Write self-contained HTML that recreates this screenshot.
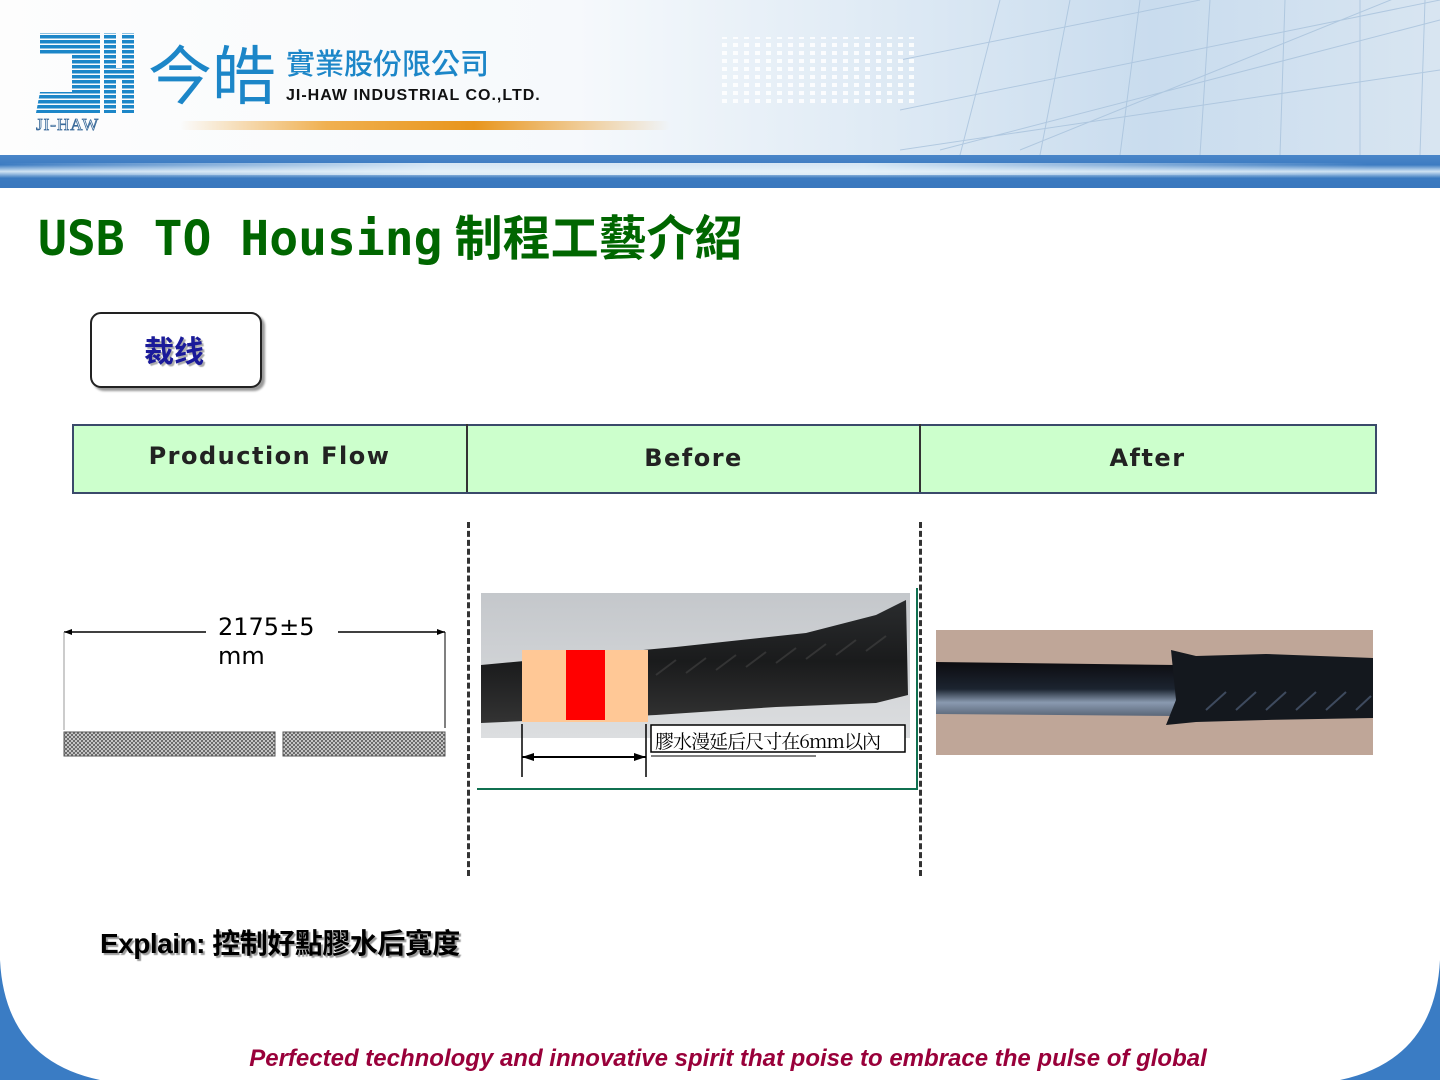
<!DOCTYPE html>
<html><head><meta charset="utf-8">
<style>
body{margin:0;width:1440px;height:1080px;position:relative;overflow:hidden;background:#fff;font-family:"Liberation Sans","Noto Sans CJK TC",sans-serif}
.a{position:absolute}
</style></head><body>
<!-- header -->
<div class="a" style="left:0;top:0;width:1440px;height:155px;background:linear-gradient(90deg,#fdfdfd 0%,#f6f9fc 40%,#e0ebf5 60%,#c9dcee 80%,#d8e5f1 100%)"></div>
<svg class="a" style="left:900px;top:0" width="540" height="155">
<g stroke="#a8c2dc" stroke-width="1" fill="none" opacity=".8">
<path d="M0 150 L540 70 M40 150 L540 20 M120 150 L540 -20 M0 110 L540 0 M0 60 L300 0"/>
<path d="M60 155 L100 0 M140 155 L170 0 M220 155 L240 0 M300 155 L310 0 M380 155 L385 0 M460 155 L460 0 M520 155 L525 0"/>
</g></svg>
<svg class="a" style="left:700px;top:35px" width="280" height="75">
<defs><pattern id="dt" width="11" height="8" patternUnits="userSpaceOnUse"><rect width="5" height="4" fill="#fff"/></pattern></defs>
<rect x="20" y="2" width="200" height="70" fill="url(#dt)" opacity=".85"/>
</svg>
<div class="a" style="left:0;top:155px;width:1440px;height:33px;background:linear-gradient(180deg,#4a86c8 0%,#3d7cc2 30%,#cfe3f3 50%,#3b7ac0 70%,#3a78be 100%)"></div>
<div class="a" style="left:0;top:163px;width:1440px;height:12px;background:linear-gradient(90deg,rgba(70,130,200,0) 0%,rgba(230,242,250,.9) 30%,rgba(230,242,250,.9) 60%,rgba(70,130,200,0) 95%)"></div>
<!-- logo -->
<svg class="a" style="left:36px;top:30px" width="105" height="105">
<defs><pattern id="st" width="4" height="5" patternUnits="userSpaceOnUse"><rect width="4" height="3.5" fill="#1c86c8"/></pattern></defs>
<g fill="url(#st)">
<rect x="4" y="3" width="60" height="22"/>
<rect x="36" y="3" width="28" height="80"/>
<polygon points="4,62 36,62 36,83 0,83"/>
<rect x="68" y="3" width="12" height="80"/>
<rect x="86" y="3" width="12" height="80"/>
<rect x="68" y="38" width="30" height="12"/>
</g>
<text x="0" y="100" font-family="Liberation Serif,serif" font-size="17" fill="none" stroke="#3a6a9a" stroke-width=".8" letter-spacing="1">JI-HAW</text>
</svg>
<div class="a" style="left:148px;top:36px;font-size:64px;line-height:72px;color:#1c86c8;font-family:'Noto Sans CJK TC',sans-serif;font-weight:400">今皓</div>
<div class="a" style="left:286px;top:44px;font-size:29px;line-height:36px;color:#1c86c8;font-family:'Noto Sans CJK TC',sans-serif;font-weight:500">實業股份限公司</div>
<div class="a" style="left:286px;top:87px;font-size:16px;font-weight:bold;color:#111;letter-spacing:1px">JI-HAW INDUSTRIAL CO.,LTD.</div>
<div class="a" style="left:180px;top:121px;width:490px;height:9px;border-radius:5px;background:linear-gradient(90deg,rgba(240,160,40,0) 0%,#f0b050 30%,#e8951c 60%,rgba(240,170,60,0) 100%)"></div>
<!-- title -->
<div class="a" style="left:38px;top:204px;font-size:48px;line-height:60px;font-weight:bold;color:#006600;font-family:'DejaVu Sans Mono','Liberation Mono','Noto Sans CJK TC',monospace;white-space:nowrap">USB TO Housing<span style="font-family:'Noto Sans CJK TC',sans-serif;margin-left:12px">制程工藝介紹</span></div>
<!-- box -->
<div class="a" style="left:90px;top:312px;width:168px;height:72px;border:2px solid #222;border-radius:11px;box-shadow:3px 3px 2px #999;background:#fff"></div>
<div class="a" style="left:88px;top:328px;width:172px;text-align:center;font-size:30px;font-weight:bold;color:#1a1a9a;font-family:'Noto Sans CJK SC',sans-serif;text-shadow:2px 2px 1px #aaa;line-height:42px">裁线</div>
<!-- table -->
<div class="a" style="left:72px;top:424px;width:1301px;height:66px;border:2px solid #3a4a6a;background:#ccffcc"></div>
<div class="a" style="left:466px;top:424px;width:2px;height:68px;background:#333"></div>
<div class="a" style="left:919px;top:424px;width:2px;height:68px;background:#333"></div>
<div class="a" style="left:72px;top:442px;width:395px;text-align:center;font-size:24px;font-weight:bold;letter-spacing:1.5px;font-family:'DejaVu Sans',sans-serif;color:#222">Production Flow</div>
<div class="a" style="left:467px;top:444px;width:453px;text-align:center;font-size:24px;font-weight:bold;letter-spacing:1.5px;font-family:'DejaVu Sans',sans-serif;color:#222">Before</div>
<div class="a" style="left:920px;top:444px;width:455px;text-align:center;font-size:24px;font-weight:bold;letter-spacing:1.5px;font-family:'DejaVu Sans',sans-serif;color:#222">After</div>
<!-- dashed -->
<div class="a" style="left:467px;top:522px;width:0;height:354px;border-left:3px dashed #333"></div>
<div class="a" style="left:919px;top:522px;width:0;height:354px;border-left:3px dashed #333"></div>
<!-- left diagram -->
<svg class="a" style="left:60px;top:615px" width="395" height="150">
<defs><pattern id="hx" width="4" height="4" patternUnits="userSpaceOnUse"><rect width="4" height="4" fill="#ddd"/><path d="M0 0L4 4M4 0L0 4" stroke="#555" stroke-width=".8"/></pattern></defs>
<line x1="4" y1="17" x2="146" y2="17" stroke="#000" stroke-width="1.5"/>
<line x1="278" y1="17" x2="385" y2="17" stroke="#000" stroke-width="1.5"/>
<polygon points="4,17 12,14 12,20"/><polygon points="385,17 377,14 377,20"/>
<line x1="4" y1="17" x2="4" y2="115" stroke="#999"/>
<line x1="385" y1="17" x2="385" y2="113" stroke="#000"/>
<rect x="4" y="117" width="211" height="24" fill="url(#hx)" stroke="#555"/>
<rect x="223" y="117" width="162" height="24" fill="url(#hx)" stroke="#555"/>
</svg>
<div class="a" style="left:218px;top:613px;font-size:24px;line-height:29px;font-family:'DejaVu Sans',sans-serif;color:#000">2175±5<br>mm</div>
<!-- before photo -->
<svg class="a" style="left:476px;top:585px" width="446" height="210">
<defs><linearGradient id="bg1" x1="0" y1="0" x2="0" y2="1"><stop offset="0" stop-color="#c4c7cb"/><stop offset="1" stop-color="#dcdee0"/></linearGradient>
<linearGradient id="cb" x1="0" y1="0" x2="0" y2="1"><stop offset="0" stop-color="#2a2c2e"/><stop offset=".5" stop-color="#1a1b1c"/><stop offset="1" stop-color="#333"/></linearGradient></defs>
<rect x="5" y="8" width="429" height="145" fill="url(#bg1)"/>
<path d="M5 80 L200 62 L330 48 L400 30 L430 15 L432 110 L400 118 L300 122 L180 130 L5 138 Z" fill="url(#cb)"/>
<g stroke="#444" stroke-width="2" opacity=".6"><path d="M180 90l20-15M210 88l20-15M240 85l20-15M270 82l20-15M300 78l20-15M330 74l20-15M360 70l20-15M390 66l20-15"/></g>
<rect x="46" y="65" width="126" height="72" fill="#ffc896"/>
<rect x="90" y="65" width="39" height="70" fill="#ff0000"/>
<rect x="175" y="140" width="254" height="27" fill="#fff" stroke="#000" stroke-width="1.5"/>
<text x="179" y="163" font-family="Noto Serif CJK SC,Liberation Serif,serif" font-size="19" fill="#000" textLength="226">膠水漫延后尺寸在6mm以內</text>
<line x1="175" y1="171" x2="340" y2="171" stroke="#000"/>
<line x1="46" y1="139" x2="46" y2="192" stroke="#000" stroke-width="1.5"/>
<line x1="170" y1="139" x2="170" y2="192" stroke="#000" stroke-width="1.5"/>
<line x1="46" y1="172" x2="170" y2="172" stroke="#000" stroke-width="2"/>
<polygon points="46,172 58,168 58,176"/><polygon points="170,172 158,168 158,176"/>
<line x1="1" y1="204" x2="442" y2="204" stroke="#107050" stroke-width="2"/>
<line x1="441" y1="3" x2="441" y2="204" stroke="#107050" stroke-width="2"/>
</svg>
<!-- after photo -->
<svg class="a" style="left:936px;top:630px" width="437" height="125">
<defs><linearGradient id="ca" x1="0" y1="0" x2="0" y2="1"><stop offset="0" stop-color="#0c0c10"/><stop offset=".5" stop-color="#1c2430"/><stop offset=".75" stop-color="#8a9ab0"/><stop offset="1" stop-color="#5a6678"/></linearGradient></defs>
<rect width="437" height="125" fill="#bfa698"/>
<path d="M0 32 L240 35 L240 86 L0 84 Z" fill="url(#ca)"/>
<path d="M235 20 L260 26 L330 24 L437 28 L437 88 L330 90 L260 92 L230 95 L240 70 Z" fill="#14181e"/>
<g stroke="#50607a" stroke-width="2" opacity=".7"><path d="M270 80l20-18M300 80l20-18M330 80l20-18M360 80l20-18M390 80l20-18M420 80l15-14"/></g>
</svg>
<!-- explain -->
<div class="a" style="left:100px;top:925px;font-size:28px;line-height:38px;font-weight:bold;color:#000;text-shadow:2px 2px 1px #999;font-family:'Liberation Sans','Noto Sans CJK TC',sans-serif;letter-spacing:-0.5px">Explain: 控制好點膠水后寬度</div>
<!-- bottom corners -->
<svg class="a" style="left:0;top:960px" width="1440" height="120">
<path d="M0 0 Q5 100 100 120 L0 120 Z" fill="#3a7cc4"/>
<path d="M1440 0 Q1435 100 1340 120 L1440 120 Z" fill="#3a7cc4"/>
</svg>
<div class="a" style="left:0;top:1045px;width:1456px;text-align:center;font-size:24px;font-weight:bold;font-style:italic;color:#99003a;white-space:nowrap">Perfected technology and innovative spirit that poise to embrace the pulse of global</div>
</body></html>
